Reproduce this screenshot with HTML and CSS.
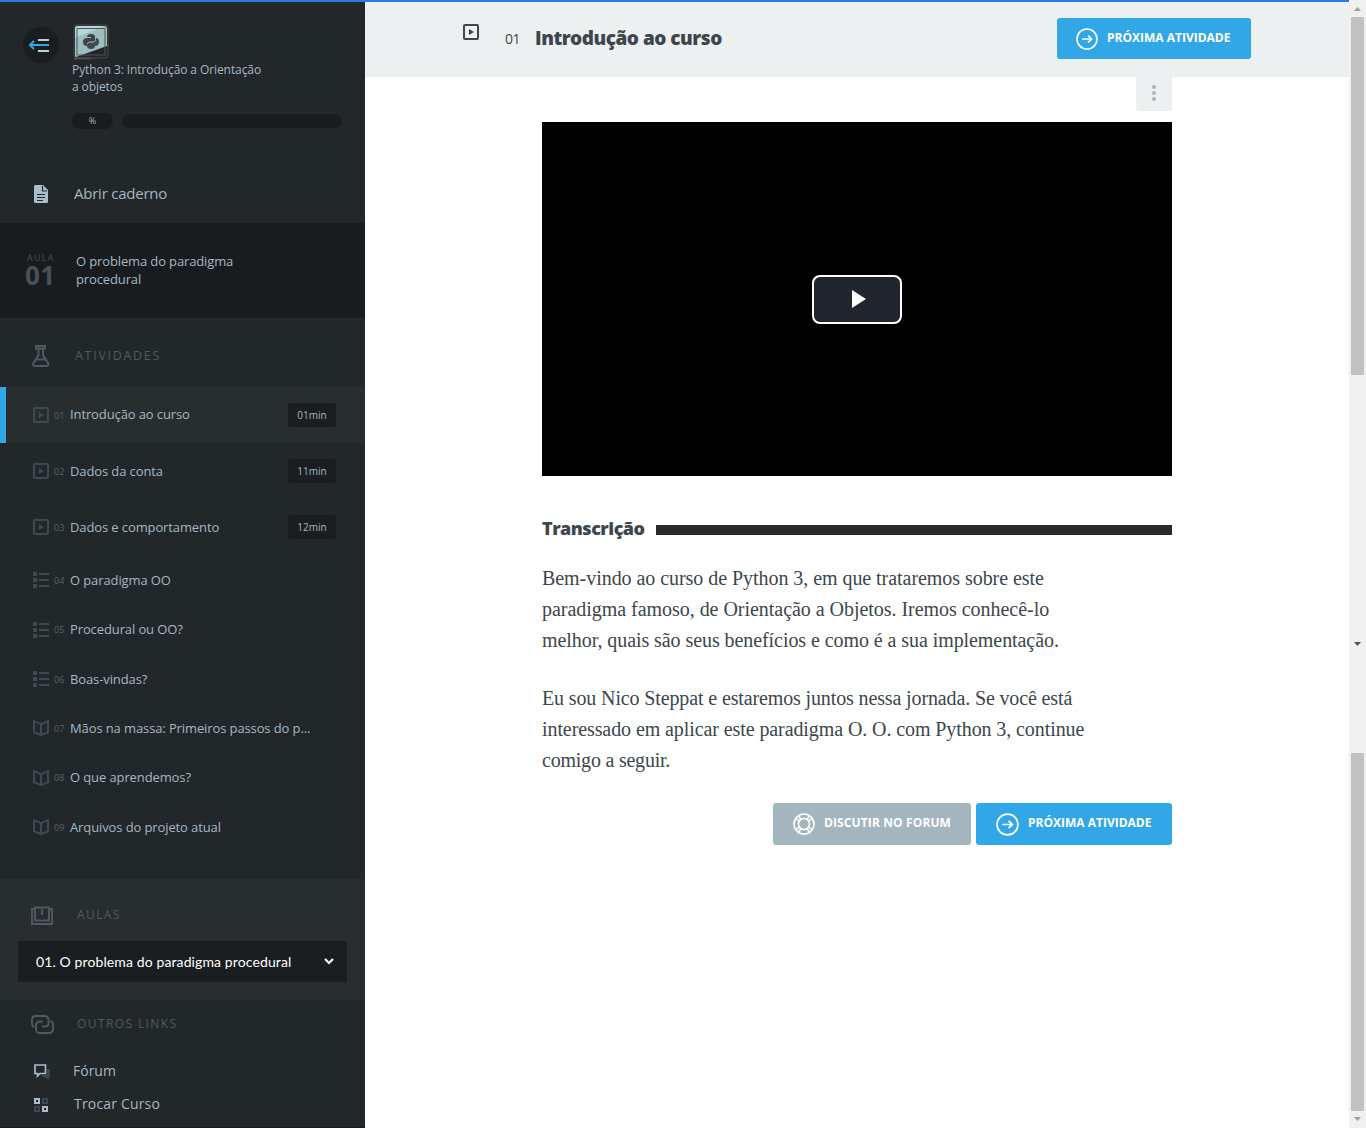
FILE: index.html
```
<!DOCTYPE html>
<html lang="pt-BR">
<head>
<meta charset="utf-8">
<title>Python 3: Introdução a Orientação a objetos</title>
<link rel="stylesheet" href="styles.css">
</head>
<body>
<svg class="defs" width="0" height="0">
  <symbol id="video" viewBox="0 0 16 16"><rect x="1" y="1" width="14" height="14" rx="1" fill="none" stroke="currentColor" stroke-width="2"/><path d="M6 5l5 3-5 3z" fill="currentColor"/></symbol>
  <symbol id="list" viewBox="0 0 16 16"><path d="M0 0h4v4H0zM0 6h4v4H0zM0 12h4v4H0zM6 1h10v2H6zM6 7h10v2H6zM6 13h10v2H6z" fill="currentColor"/></symbol>
  <symbol id="book" viewBox="0 0 16 16"><path d="M1 1.200l7 3 7-3v11L8 15l-7-2.800zM8 4.200V15" fill="none" stroke="currentColor" stroke-width="2"/></symbol>
  <symbol id="next" viewBox="0 0 22 22"><g fill="none" stroke="currentColor"><circle cx="11" cy="11" r="10" stroke-width="1.600"/><path d="M6 11h9.500M12 7.500l3.700 3.500-3.700 3.500" stroke-width="1.600"/></g></symbol>
</svg>
<div class="app">
  <div class="topline"></div>
  <aside class="sidebar">
    <header class="course">
      <div class="toggle"><svg width="20" height="16" viewBox="0 0 20 16"><path d="M9 3h11M9 14h11" stroke="#c3cdd1" stroke-width="2"/><path d="M1 8h19M5 4L1 8l4 4" fill="none" stroke="#31a7e7" stroke-width="2"/></svg></div>
      <div class="course-info">
        <svg class="logo" width="38" height="37" viewBox="0 0 38 37">
          <rect x="2" y="1" width="34" height="33" rx="3" fill="#22272a" stroke="#4b4d4f"/>
          <path d="M3 5q0-3 3-3h26q3 0 3 3v17L4 33q-1 0-1-2z" fill="#9fbdbe"/>
          <path d="M3 14V5q0-3 3-3h26z" fill="#b8d5d9"/>
          <path d="M5 4.500h28v26.500H5z" fill="none" stroke="#4c5658"/>
          <path d="M36 20v2M2 34.500h17" stroke="#4b4d4f" stroke-width="2"/>
          <path d="M15 13q0-3 4-3t4 3v4q0 2-3 2h-3q-2 0-2 3-4 0-4-4t4-4h4v-1z" fill="#3c4448"/>
          <path d="M23 22q0 3-4 3t-4-3v-3q0-2 3-2h3q3 0 3-3 3 0 3 4t-4 4h-4z" fill="#444b4e"/>
          <path d="M15 20q1-2 3-2h3q2 0 3-2" fill="none" stroke="#9fbdbe"/>
        </svg>
        <h2 class="course-title">Python 3: Introdução a Orientação<br>a objetos</h2>
        <div class="progress"><span class="percent">%</span><span class="track"></span></div>
      </div>
    </header>
    <a class="notebook"><svg width="14" height="18" viewBox="0 0 14 18"><path d="M1.500 0H9l5 5v11.500q0 1.500-1.500 1.500h-11Q0 18 0 16.500v-15Q0 0 1.500 0z" fill="#a9bec7"/><path d="M8.500 1v5H13M3 9.500h8M3 12.500h8M3 15.500h6" fill="none" stroke="#22272a" stroke-width="1.200"/></svg><span>Abrir caderno</span></a>
    <section class="lesson">
      <div class="lesson-no"><small>AULA</small><strong>01</strong></div>
      <p class="lesson-name">O problema do paradigma<br>procedural</p>
    </section>
    <h3 class="heading activities"><svg width="18" height="22" viewBox="0 0 18 22"><path d="M4 1h9v2.500H4zM6.500 4v6L1.300 18.500Q.5 21 3 21h11.500q2.500 0 1.700-2.500L11 10V4M4.500 14.500h8.500" fill="none" stroke="currentColor" stroke-width="1.900"/></svg><span>ATIVIDADES</span></h3>
    <ul class="tasks">
      <li class="task timed active"><svg class="ico"><use href="#video"/></svg><i>01</i><span class="name up">Introdução ao curso</span><b>01min</b></li>
      <li class="task timed"><svg class="ico"><use href="#video"/></svg><i>02</i><span class="name">Dados da conta</span><b>11min</b></li>
      <li class="task timed"><svg class="ico"><use href="#video"/></svg><i>03</i><span class="name">Dados e comportamento</span><b>12min</b></li>
      <li class="task"><svg class="ico"><use href="#list"/></svg><i>04</i><span class="name">O paradigma OO</span></li>
      <li class="task"><svg class="ico"><use href="#list"/></svg><i>05</i><span class="name up">Procedural ou OO?</span></li>
      <li class="task"><svg class="ico"><use href="#list"/></svg><i>06</i><span class="name">Boas-vindas?</span></li>
      <li class="task"><svg class="ico"><use href="#book"/></svg><i>07</i><span class="name">Mãos na massa: Primeiros passos do p...</span></li>
      <li class="task"><svg class="ico"><use href="#book"/></svg><i>08</i><span class="name up">O que aprendemos?</span></li>
      <li class="task"><svg class="ico"><use href="#book"/></svg><i>09</i><span class="name">Arquivos do projeto atual</span></li>
    </ul>
    <section class="lessons">
      <h3 class="heading"><svg width="22" height="19" viewBox="0 0 22 19"><path d="M3 3H1v15h20V3h-2M4 1.500h5q2 0 2 1 0-1 2-1h5v13h-5q-2 0-2 1 0-1-2-1H4zM11 3v6" fill="none" stroke="currentColor" stroke-width="1.900"/></svg><span>AULAS</span></h3>
      <div class="select"><span>01. O problema do paradigma procedural</span><svg width="10" height="7" viewBox="0 0 10 7"><path d="M1 1l4 4 4-4" fill="none" stroke="#fff" stroke-width="2.200"/></svg></div>
    </section>
    <section class="links">
      <h3 class="heading"><svg width="23" height="19" viewBox="0 0 23 19"><path d="M3 12.500Q1 11 1 8V5q0-4 4-4h8q4.500 0 4.500 4v3.500q0 3-4 3H11M19.500 6q2.500 1 2.500 4v4q0 4-4 4H9q-4 0-4-4v-4q0-3.500 4-3.500h3" fill="none" stroke="currentColor" stroke-width="1.900"/></svg><span>OUTROS LINKS</span></h3>
      <a class="link forum"><svg width="16" height="16" viewBox="0 0 16 16"><path d="M13 5h3v8h-1v3l-4-3H8v-2h5z" fill="#3d484e"/><path d="M1 1h10.500v8.500H6L3.500 12V9.500H1z" fill="none" stroke="#a9bec7" stroke-width="1.700"/></svg><span>Fórum</span></a>
      <a class="link"><svg width="16" height="14" viewBox="0 0 16 14"><g fill="none" stroke-width="2"><path d="M1 1h4v4H1zM9 9h4v4H9z" stroke="#a9bec7"/><path d="M9 1h4v4H9zM1 9h4v4H1z" stroke="#3d484e"/></g></svg><span>Trocar Curso</span></a>
    </section>
  </aside>
  <main class="main">
    <header class="bar">
      <svg class="bar-icon" width="16" height="16"><use href="#video"/></svg>
      <span class="bar-no">01</span><h1>Introdução ao curso</h1>
      <a class="btn btn-top"><svg width="22" height="22"><use href="#next"/></svg><span>PRÓXIMA ATIVIDADE</span></a>
    </header>
    <article class="content">
      <div class="more"><span></span><span></span><span></span></div>
      <div class="player"><div class="play"><svg width="14" height="18" viewBox="0 0 14 18"><path d="M0 0l14 9-14 9z" fill="#fff"/></svg></div></div>
      <h2 class="transcript"><span>Transcrição</span></h2>
      <p class="text"><span class="l1">Bem-vindo ao curso de Python 3, em que trataremos sobre este</span><br><span class="l2">paradigma famoso, de Orientação a Objetos. Iremos conhecê-lo</span><br><span class="l3">melhor, quais são seus benefícios e como é a sua implementação.</span></p>
      <p class="text"><span class="l4">Eu sou Nico Steppat e estaremos juntos nessa jornada. Se você está</span><br><span class="l5">interessado em aplicar este paradigma O. O. com Python 3, continue</span><br><span class="l6">comigo a seguir.</span></p>
      <div class="actions">
        <a class="btn grey"><svg width="22" height="22" viewBox="0 0 22 22"><g fill="none" stroke="#fff" stroke-width="1.600"><circle cx="11" cy="11" r="10"/><circle cx="11" cy="11" r="5.500"/><path d="M2.800 5.500l4 2.700M5.500 2.800l2.700 4M19.200 5.500l-4 2.700M16.500 2.800l-2.700 4M2.800 16.500l4-2.700M5.500 19.200l2.700-4M19.200 16.500l-4-2.700M16.500 19.200l-2.700-4"/></g></svg><span>DISCUTIR NO FORUM</span></a>
        <a class="btn"><svg width="23" height="23"><use href="#next"/></svg><span>PRÓXIMA ATIVIDADE</span></a>
      </div>
    </article>
  </main>
  <div class="scroll">
    <svg width="17" height="1128" viewBox="0 0 17 1128"><path d="M0 0h17v1128H0z" fill="#f0f0f0"/><path d="M2 17h13v358H2zM2 753h13v358H2z" fill="#c1c1c1"/><path d="M5 11l3.500-4 3.500 4zM5 1117h7l-3.500 4z" fill="#a0a0a0"/><path d="M5 642h7l-3.500 4z" fill="#505050"/></svg>
  </div>
</div>
</body>
</html>
```
FILE: styles.css
```
* { box-sizing: border-box; margin: 0; padding: 0; }
body { font-family: "Open Sans", "Noto Sans", sans-serif; background: #fff; overflow: hidden; }
svg { display: block; flex: none; }
.defs { position: absolute; }
.app { display: grid; grid-template-columns: 365px 984px 17px; height: 1128px; position: relative; }
.topline { position: absolute; left: 0; top: 0; width: 1349px; height: 2px; background: #2b7ae4; z-index: 2; }
.sidebar { background: #22272a; color: #a3b8c2; height: 1128px; overflow: hidden; border-bottom: 1px solid #1a1d20; }
.course { display: flex; height: 165px; padding: 24px 23px 0; gap: 13px; }
.toggle { width: 36px; height: 36px; margin-top: 3px; padding-right: 4px; border-radius: 50%; background: #1a1e20; display: flex; align-items: center; justify-content: center; }
.course-title { font-size: 12px; line-height: 17px; font-weight: 400; letter-spacing: -0.090px; white-space: nowrap; }
.progress { display: flex; align-items: center; gap: 9px; margin-top: 18px; }
.percent { width: 41px; height: 16px; border-radius: 8px; background: #181c1e; font-size: 9px; line-height: 16px; text-align: center; }
.track { width: 220px; height: 14px; border-radius: 7px; background: #181c1e; }
.notebook { display: flex; align-items: center; height: 58px; padding-left: 34px; gap: 26px; font-size: 15px; letter-spacing: -0.230px; }
.notebook span { margin-top: -2px; }
.lesson { display: flex; height: 95px; padding: 29px 25px 0; background: #181c1f; }
.lesson-no { width: 51px; color: #475156; display: flex; flex-direction: column; }
.lesson-no small { font-size: 9px; line-height: 11px; letter-spacing: 1.300px; padding-left: 2px; }
.lesson-no strong { font-size: 26px; line-height: 25px; letter-spacing: 0.500px; }
.lesson-name { font-size: 13px; line-height: 18px; letter-spacing: -0.130px; white-space: nowrap; }
.heading { display: flex; align-items: center; color: #4f5b61; font-size: 12px; font-weight: 400; letter-spacing: 1.400px; }
.activities { height: 69px; padding: 6px 0 0 32px; gap: 25px; font-size: 12.500px; letter-spacing: 1.700px; }
.tasks { list-style: none; height: 492px; }
.task { display: flex; align-items: center; height: 49.400px; padding: 0 29px 0 33px; font-size: 13px; }
.task.timed { height: 56.200px; }
.task.active { background: #282d30; border-left: 6px solid #31a7e7; padding-left: 27px; }
.ico { width: 16px; height: 16px; color: #3e4950; }
.task i { width: 21px; padding-left: 5px; font-style: normal; font-size: 9px; color: #57646b; }
.name { flex: 1; letter-spacing: -0.110px; white-space: nowrap; }
.name.up { margin-top: -2px; }
.task b { width: 48px; height: 24px; border-radius: 2px; background: #1a1e20; font-size: 10px; line-height: 24px; font-weight: 400; text-align: center; }
.lessons { height: 121px; padding: 26px 18px 0; background: #282d30; }
.lessons .heading { height: 20px; padding-left: 13px; gap: 24px; }
.lessons .heading span, .links .heading span { margin-top: -2px; }
.select { display: flex; align-items: center; justify-content: space-between; height: 41px; margin-top: 16px; padding: 0 13px 0 18px; background: #1a1e20; color: #fff; font: 14px Lato, sans-serif; letter-spacing: 0.110px; }
.links { padding-top: 14px; }
.links .heading { height: 20px; padding-left: 31px; gap: 23px; }
.link { display: flex; align-items: center; height: 33px; padding-left: 34px; gap: 24px; font-size: 14px; letter-spacing: 0.180px; }
.link svg { margin-top: 2px; }
.forum { margin-top: 20px; gap: 23px; letter-spacing: 0; }
.bar { height: 77px; background: #ecf0f1; display: flex; padding: 0 98px 0 98px; color: #3d464d; }
.bar-icon { margin-top: 24px; }
.bar-no { margin: 29px 0 0 26px; width: 30px; font-size: 14px; line-height: 20px; letter-spacing: -0.400px; }
.bar h1 { margin-top: 25px; font-size: 19px; line-height: 26px; font-weight: 800; letter-spacing: -0.480px; white-space: nowrap; }
.btn { display: flex; align-items: center; gap: 9px; height: 42px; width: 196px; padding-left: 20px; background: #31a7e7; color: #fff; border-radius: 3px; font-size: 12px; font-weight: 700; white-space: nowrap; }
.btn span { margin-top: -3px; }
.btn-top { width: 194px; height: 41px; margin: 18px 0 0 auto; padding-left: 19px; }
.grey { width: 198px; background: #a3b6bf; letter-spacing: 0.120px; }
.content { width: 630px; margin-left: 177px; }
.more { width: 36px; height: 34px; margin-left: auto; padding-bottom: 2px; display: flex; flex-direction: column; align-items: center; justify-content: center; gap: 2px; background: #ecf0f1; border-radius: 0 0 3px 3px; }
.more span { width: 4px; height: 4px; border-radius: 50%; background: #a3b6bf; }
.player { height: 354px; margin-top: 11px; background: #000; display: flex; align-items: center; justify-content: center; }
.play { width: 90px; height: 49px; border: 2px solid #fff; border-radius: 8px; background: #20252e; display: flex; align-items: center; justify-content: center; padding-left: 3px; }
.transcript { display: flex; align-items: center; height: 26px; margin-top: 39px; gap: 11px; font-size: 18px; font-weight: 800; color: #3d464d; }
.transcript span { letter-spacing: -0.500px; }
.transcript::after { content: ""; flex: 1; height: 10px; margin-top: 4px; background: #272b2e; }
.text { margin-top: 22px; font: 20px/31px "Liberation Serif", serif; color: #3d464d; white-space: nowrap; }
.text + .text { margin-top: 27px; }
.l1 { letter-spacing: -0.050px; }
.l2 { letter-spacing: -0.035px; }
.l3 { letter-spacing: -0.070px; }
.l4 { letter-spacing: -0.130px; }
.l5 { letter-spacing: -0.090px; }
.l6 { letter-spacing: -0.220px; }
.actions { display: flex; justify-content: flex-end; gap: 5px; margin-top: 27px; }
```
